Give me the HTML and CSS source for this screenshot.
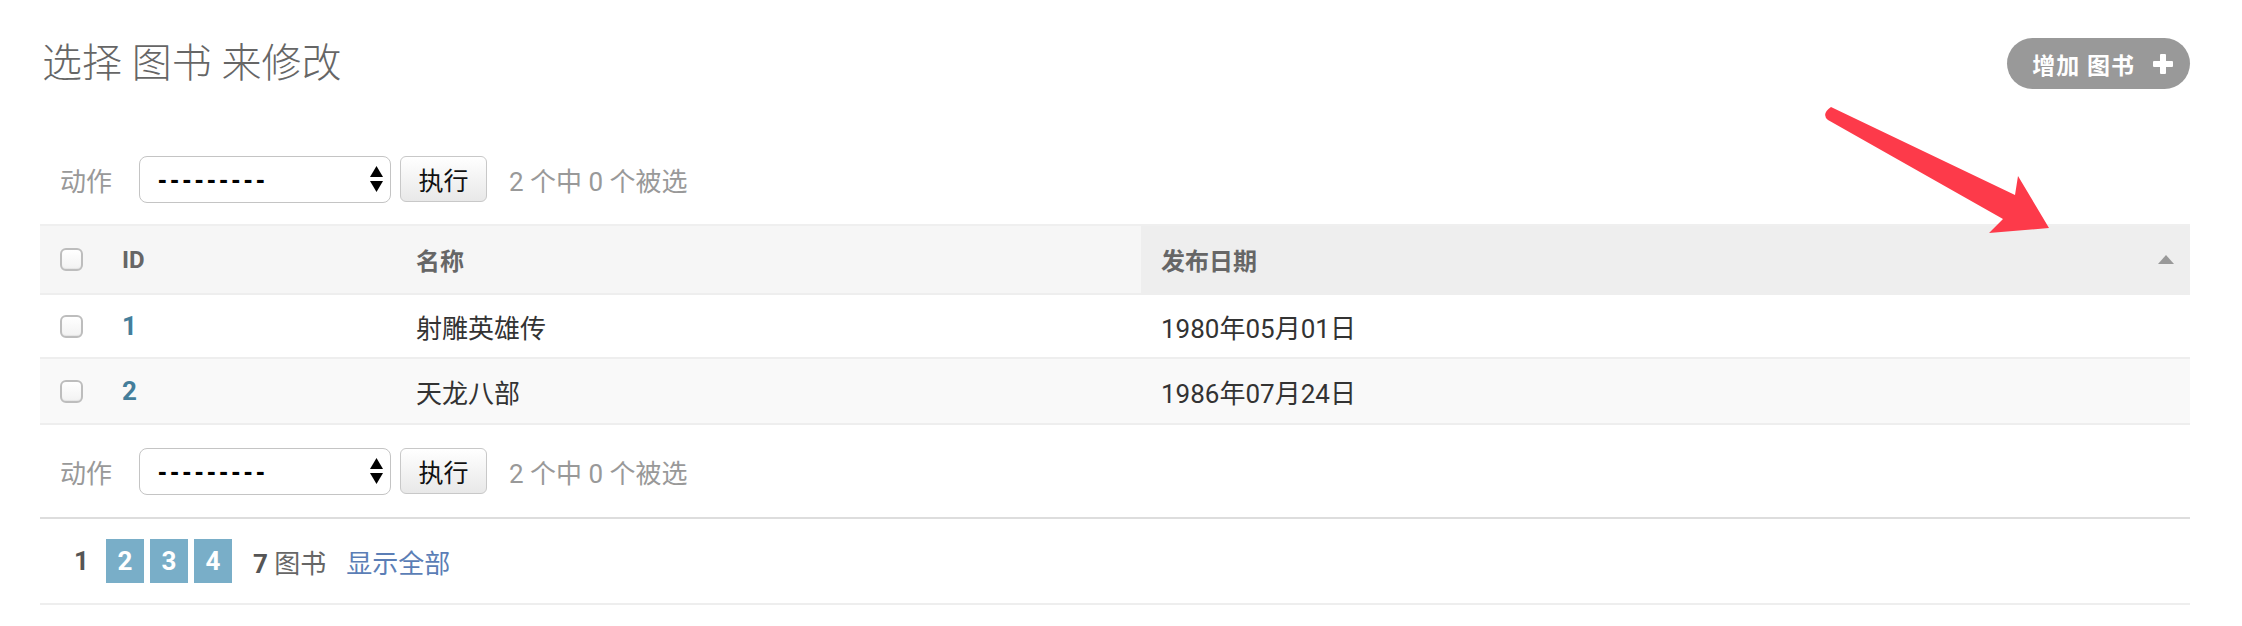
FILE: index.html
```html
<!DOCTYPE html>
<html lang="zh-CN">
<head>
<meta charset="utf-8">
<title>选择 图书 来修改</title>
<link rel="stylesheet" href="styles.css">
</head>
<body>
<div class="page">
  <div class="page-head">
    <h1>选择 图书 来修改</h1>
    <a class="addlink" href="#">增加 图书<svg class="plus" width="20" height="20" viewBox="0 0 20 20"><rect x="7" y="0" width="6" height="20" rx="1" fill="#fff"/><rect x="0" y="7" width="20" height="6" rx="1" fill="#fff"/></svg></a>
  </div>

  <div class="actions">
    <span class="act-label">动作</span>
    <div class="select"><span class="sel-text">---------</span><svg width="13" height="26" viewBox="0 0 13 26"><polygon points="6.5,0 13,11 0,11" fill="#000"/><polygon points="0,15 13,15 6.5,26" fill="#000"/></svg></div>
    <button class="go" type="button">执行</button>
    <span class="counter">2 个中 0 个被选</span>
  </div>

  <table class="result">
    <colgroup><col class="c1"><col class="c2"><col class="c3"><col class="c4"></colgroup>
    <thead>
      <tr>
        <th><span class="cb"></span></th>
        <th>ID</th>
        <th>名称</th>
        <th class="sorted"><div class="th-inner"><span>发布日期</span><svg class="sort-up" width="16" height="9" viewBox="0 0 16 9"><polygon points="8,0 16,9 0,9" fill="#999"/></svg></div></th>
      </tr>
    </thead>
    <tbody>
      <tr class="row1">
        <td><span class="cb"></span></td>
        <td><a class="idlink" href="#">1</a></td>
        <td>射雕英雄传</td>
        <td>1980年05月01日</td>
      </tr>
      <tr class="row2">
        <td><span class="cb"></span></td>
        <td><a class="idlink" href="#">2</a></td>
        <td>天龙八部</td>
        <td>1986年07月24日</td>
      </tr>
    </tbody>
  </table>

  <div class="actions actions-bottom">
    <span class="act-label">动作</span>
    <div class="select"><span class="sel-text">---------</span><svg width="13" height="26" viewBox="0 0 13 26"><polygon points="6.5,0 13,11 0,11" fill="#000"/><polygon points="0,15 13,15 6.5,26" fill="#000"/></svg></div>
    <button class="go" type="button">执行</button>
    <span class="counter">2 个中 0 个被选</span>
  </div>

  <div class="paginator">
    <span class="this-page">1</span>
    <a class="pg" href="#">2</a>
    <a class="pg" href="#">3</a>
    <a class="pg last" href="#">4</a>
    <span class="total"><b>7</b> 图书</span>
    <a class="showall" href="#">显示全部</a>
  </div>
</div>

<svg class="annot" width="2242" height="626" viewBox="0 0 2242 626">
  <path d="M1831 107 L2015 195 L2018 176 L2049 228 L1989 233 L2003 219 L1828 120 Q1821 114 1831 107 Z" fill="#fd3a4a"/>
</svg>
</body>
</html>
```
FILE: styles.css
```css
html, body {
  margin: 0;
  padding: 0;
  background: #fff;
}
body {
  position: relative;
  width: 2242px;
  height: 626px;
  overflow: hidden;
  font-family: Roboto, "Noto Sans CJK SC", sans-serif;
  color: #333;
}
.page {
  padding: 0 52px 0 40px;
}
.page-head {
  display: flex;
  justify-content: space-between;
  align-items: center;
  height: 51px;
  margin-top: 38px;
}
h1 {
  margin: 0;
  padding-left: 2px;
  font-size: 40px;
  font-weight: 300;
  line-height: 51px;
  color: #666;
}
.addlink {
  display: flex;
  align-items: center;
  gap: 18px;
  height: 51px;
  box-sizing: border-box;
  padding: 0 17px 0 25px;
  background: #999;
  border-radius: 26px;
  color: #fff;
  font-size: 23px;
  font-weight: 600;
  letter-spacing: 1px;
  text-decoration: none;
}
.plus { display: block; }

.actions {
  display: flex;
  align-items: center;
  height: 90px;
  margin-top: 45px;
  font-size: 26px;
  color: #999;
}
.actions-bottom {
  margin-top: 0;
  height: 92px;
  border-bottom: 2px solid #ddd;
}
.act-label {
  margin-left: 20px;
  margin-right: 27px;
}
.select {
  display: flex;
  align-items: center;
  justify-content: space-between;
  width: 252px;
  height: 47px;
  box-sizing: border-box;
  padding: 0 7px 0 18px;
  border: 1.5px solid #c4c4c4;
  border-radius: 8px;
  background: #fff;
}
.sel-text {
  font-family: "Liberation Sans", sans-serif;
  font-weight: bold;
  font-size: 26px;
  letter-spacing: 3.6px;
  color: #000;
}
.go {
  margin-left: 9px;
  width: 87px;
  height: 46px;
  box-sizing: border-box;
  padding: 0;
  border: 1.5px solid #c8c8c8;
  border-radius: 6px;
  background: linear-gradient(#ffffff, #e8e8e8);
  font-family: Roboto, "Noto Sans CJK SC", sans-serif;
  font-size: 25px;
  color: #111;
}
.counter {
  margin-left: 22px;
  color: #999;
}

.result {
  width: 100%;
  table-layout: fixed;
  border-collapse: separate;
  border-spacing: 0;
}
.c1 { width: 62px; }
.c2 { width: 294px; }
.c3 { width: 745px; }
th {
  height: 69px;
  box-sizing: border-box;
  padding: 0 20px;
  background: #f6f6f6;
  border-top: 2px solid #efefef;
  text-align: left;
  font-size: 24px;
  font-weight: bold;
  color: #666;
}
th.sorted {
  background: #eee;
  padding-right: 16px;
}
.th-inner {
  display: flex;
  align-items: center;
  justify-content: space-between;
}
.sort-up { display: block; }
td {
  height: 66px;
  box-sizing: border-box;
  padding: 0 20px;
  border-bottom: 2px solid #eee;
  font-size: 26px;
  color: #333;
}
tbody tr:first-child td { border-top: 2px solid #eee; }
.row2 td { background: #f9f9f9; }
.cb {
  display: block;
  width: 23px;
  height: 23px;
  box-sizing: border-box;
  border: 2px solid #bdbdbd;
  border-radius: 6px;
  background: linear-gradient(#ffffff, #f2f2f2);
  box-shadow: inset 0 -1px 1px rgba(0,0,0,0.06);
}
.idlink {
  color: #447e9b;
  font-weight: bold;
  text-decoration: none;
}

.paginator {
  display: flex;
  align-items: center;
  height: 84px;
  padding-left: 34px;
  border-bottom: 2px solid #eee;
  font-size: 26px;
  color: #666;
}
.this-page {
  font-weight: bold;
  color: #555;
  margin-right: 17px;
}
.pg {
  display: flex;
  align-items: center;
  justify-content: center;
  width: 38px;
  height: 44px;
  margin-right: 6px;
  background: #79aec8;
  color: #fff;
  font-weight: bold;
  text-decoration: none;
}
.pg.last { margin-right: 21px; }
.total { margin-right: 20px; }
.total b { color: #555; }
.showall {
  color: #5b7eb6;
  text-decoration: none;
}

.annot {
  position: absolute;
  left: 0;
  top: 0;
  pointer-events: none;
}
```
